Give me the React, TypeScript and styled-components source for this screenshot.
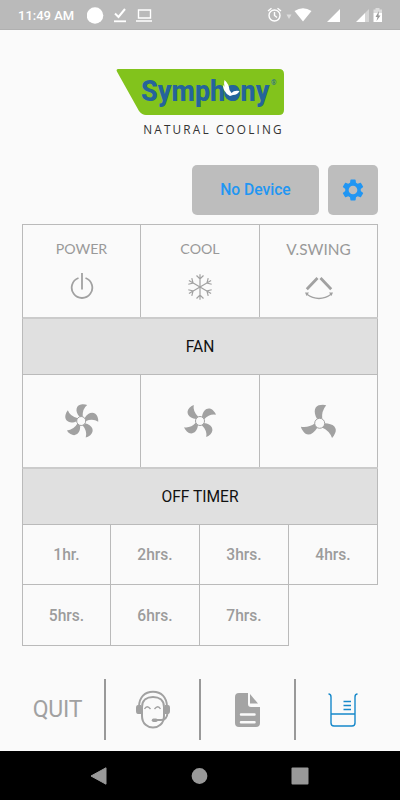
import React from "react";
import styled, { createGlobalStyle } from "styled-components";

const GlobalStyle = createGlobalStyle`
  * { box-sizing: border-box; }
  body { margin: 0; background: #fafafa; font-family: Roboto, sans-serif; }
  svg { display: block; flex: none; }
`;

const LINE = "#bababa";
const ICON = "#a1a1a1";

const Screen = styled.div`
  width: 400px;
  height: 800px;
  display: flex;
  flex-direction: column;
  background: #fafafa;
  overflow: hidden;
`;

const StatusBar = styled.header`
  height: 30px;
  flex: none;
  display: flex;
  align-items: center;
  justify-content: space-between;
  padding: 2px 17px 0 18px;
  background: #bababa;
  border-bottom: 1px solid #b0b0b0;
  color: #fff;
`;

const StatusGroup = styled.div`
  display: flex;
  align-items: center;
`;

const Clock = styled.span`
  width: 69px;
  font-size: 13px;
  font-weight: 500;
  white-space: nowrap;
`;

const Brand = styled.div`
  display: flex;
  flex-direction: column;
  align-items: center;
  height: 135px;
  padding-top: 39px;
`;

const Tagline = styled.div`
  margin-top: 4px;
  padding-left: 27px;
  font-family: "Open Sans", sans-serif;
  font-size: 11.8px;
  line-height: 16px;
  letter-spacing: 2.15px;
  color: #333;
  white-space: nowrap;
`;

const DeviceBar = styled.div`
  display: flex;
  justify-content: flex-end;
  gap: 9px;
  padding-right: 22px;
  height: 59px;
`;

const DeviceButton = styled.button<{ $width: number }>`
  width: ${(p) => p.$width}px;
  height: 50px;
  padding: 0;
  border: 0;
  border-radius: 5px;
  display: flex;
  align-items: center;
  justify-content: center;
  background: #bdbdbd;
  color: #2196f3;
  font: 500 15.6px Roboto, sans-serif;
`;

const Panel = styled.main`
  width: 356px;
  margin-left: 22px;
  flex: none;
`;

const ControlRow = styled.div`
  display: grid;
  grid-template-columns: 118px 119px 118px;
  height: 94px;
  border-left: 1px solid ${LINE};
  border-bottom: 2px solid #cbcbcb;
`;

const FunctionRow = styled(ControlRow)`
  height: 95px;
  border-top: 1px solid ${LINE};
`;

const ControlCell = styled.div`
  display: flex;
  flex-direction: column;
  align-items: center;
  border-right: 1px solid ${LINE};
`;

const FanCell = styled(ControlCell)`
  justify-content: center;
`;

const Label = styled.span<{ $size?: number }>`
  height: 47px;
  padding-top: 13px;
  font-family: Lato, sans-serif;
  font-size: ${(p) => p.$size ?? 14.2}px;
  line-height: 22px;
  color: #999;
`;

const SectionTitle = styled.div`
  height: 56px;
  display: flex;
  align-items: center;
  justify-content: center;
  background: #e0e0e0;
  border: 1px solid ${LINE};
  border-top: 0;
  font-size: 15.6px;
  color: #111;
`;

const TimerGrid = styled.div`
  display: grid;
  grid-template-columns: 89px 89px 89px 89px;
  grid-template-rows: 60px 61px;
`;

const TimerCell = styled.div<{ $first?: boolean }>`
  display: flex;
  align-items: center;
  justify-content: center;
  padding-top: 1px;
  border: solid ${LINE};
  border-width: 0 1px 1px ${(p) => (p.$first ? 1 : 0)}px;
  font-size: 15.6px;
  font-weight: 500;
  color: #9c9c9c;
`;

const Footer = styled.footer`
  display: grid;
  grid-template-columns: 95px 95px 95px 93px;
  height: 61px;
  margin: 33px 0 11px 11px;
  flex: none;
`;

const FooterItem = styled.div<{ $last?: boolean }>`
  display: flex;
  align-items: center;
  justify-content: center;
  border-right: ${(p) => (p.$last ? "0" : "2px solid #999")};
`;

const Quit = styled.span`
  font-size: 23px;
  letter-spacing: -0.2px;
  color: #a1a1a1;
`;

const NavBar = styled.nav`
  flex: 1;
  display: flex;
  justify-content: space-between;
  align-items: center;
  padding: 0 91px 0 90px;
  background: #000;
`;

const Logo = () => (
  <svg width="168" height="48" viewBox="116 69 168 48">
    <path d="M118.5 69H279q5 0 5 5v36q0 5-5 5H146q-4 0-7-4L117.2 72q-1.700-3 1.300-3Z" fill="#82c31c" />
    <text x="141" y="101" textLength="128.500" lengthAdjust="spacingAndGlyphs" fontFamily="Roboto, sans-serif" fontWeight="800" fontSize="30" fill="#25649b">Symphony</text>
    <circle cx="232" cy="93" r="7.800" fill="#25649b" />
    <path d="M224.500 80Q229 84 229.500 90L231.500 93Q234 90 239.500 91Q237.500 95 233 95L230 96Q226 94 224 90Q222.500 86 223.500 85L224.500 87Q223.500 83 224.500 80Z" fill="#fff" />
    <text x="271" y="85" fontFamily="Roboto, sans-serif" fontSize="7" fill="#25649b">®</text>
  </svg>
);

const BLADE = "M-1.500-4C-7-10-5-16.500 1-16.800Q4-17 6-16Q.8-12 1.500-4Z";
const LARGE_BLADE = "M-2.500-4C-7-12-5-18 1-18.300Q4-18.800 6.500-18Q1.500-12 2.500-4Z";

const Fan = ({ blades, turn = 0, dx = 0, dy = 0 }: { blades: number; turn?: number; dx?: number; dy?: number }) => (
  <svg width="42" height="42" viewBox="-21 -21 42 42">
    <g transform={`translate(${dx} ${dy})`}>
      {Array.from({ length: blades }, (_, i) => (
        <path key={i} d={blades === 3 ? LARGE_BLADE : BLADE} fill={ICON} transform={`rotate(${turn + (i * 360) / blades})`} />
      ))}
      <circle r={blades === 3 ? 5 : 4.5} fill="#fafafa" stroke={ICON} strokeWidth="1" />
    </g>
  </svg>
);

const Power = () => (
  <svg width="24" height="30" viewBox="-12 -15 24 30" fill="none" stroke={ICON} strokeWidth="1.800">
    <path d="M-3.500-9A10.300 10.300 0 1 0 3.500-9M0-14V2.500" />
  </svg>
);

const Snowflake = () => (
  <svg width="30" height="30" viewBox="-15 -15 30 30" fill="none" stroke={ICON} strokeWidth="1.200">
    {[0, 60, 120, 180, 240, 300].map((a) => (
      <path key={a} d="M0 0V-12.800M-3.500-11.500L0-8L3.500-11.500" transform={`rotate(${a})`} />
    ))}
  </svg>
);

const Swing = () => (
  <svg width="30" height="30" viewBox="0 0 30 30" fill="none" stroke={ICON}>
    <path d="M2.800 17.200L13.500 6M16.500 6L27.200 17.200" strokeWidth="2.800" />
    <path d="M2.500 22Q15 31 27.500 22" strokeWidth="1.500" />
    <path d="M1 20.500H5L2.500 24ZM29 20.500H25L27.500 24Z" fill={ICON} stroke="none" />
  </svg>
);

const Support = () => (
  <svg width="38" height="40" viewBox="0 0 38 40" fill="none" stroke={ICON} strokeWidth="2">
    <path d="M8 17V26C8 34 14 37.500 19 37.500S30 34 30 26V17C30 10 25 7 19 7S8 10 8 17Z" />
    <path d="M5 17C5 7 11 1.800 19 1.800S33 7 33 17" />
    <path d="M6 16H4Q3 16 3 18V21Q3 23 4 23H6ZM32 16H34Q35 16 35 18V21Q35 23 34 23H32Z" fill={ICON} />
    <path d="M33.500 23Q33 30 27 30H21" />
    <path d="M19.500 30.300H22" strokeWidth="3.500" strokeLinecap="round" />
    <path d="M10.500 19Q13 14.500 16.500 19M20.500 19Q24 14.500 26.500 19" strokeWidth="1.300" />
  </svg>
);

const Document = () => (
  <svg width="25" height="34" viewBox="0 0 25 34">
    <path d="M4 0H13V11Q13 14 16 14H25V30Q25 34 21 34H4Q0 34 0 30V4Q0 0 4 0ZM15 1L23 10.500H15Z" fill="#a4a4a4" />
    <path d="M6 21.500H19.500M6 29.200H19.500" stroke="#fafafa" strokeWidth="2.500" strokeLinecap="round" />
  </svg>
);

const Beaker = () => (
  <svg width="34" height="34" viewBox="0 0 34 34" fill="none" stroke="#1688ca" strokeWidth="1.400">
    <path d="M2.500 1Q5 1 5 4V30Q5 33 8 33H26Q29 33 29 30V4Q29 1 31.500 1M5 21H29M17.500 8.500H25M17.500 12.500H25M17.500 16.500H25" />
  </svg>
);

const Gear = () => (
  <svg width="26" height="26" viewBox="0 0 24 24" fill="#2196f3">
    <path d="M19.140 12.940c.04-.3.060-.61.060-.94s-.02-.64-.07-.94l2.030-1.580a.49.490 0 0 0 .12-.61l-1.920-3.320a.49.490 0 0 0-.59-.22l-2.390.960c-.5-.38-1.030-.7-1.620-.94L14.400 2.810a.48.480 0 0 0-.48-.41h-3.840a.47.470 0 0 0-.47.410L9.250 5.350c-.59.240-1.130.57-1.620.94l-2.390-.96a.48.480 0 0 0-.59.220L2.740 8.870a.47.470 0 0 0 .12.610l2.030 1.580c-.05.300-.09.630-.09.940s.02.640.070.940l-2.030 1.580a.49.490 0 0 0-.12.610l1.920 3.320c.12.220.37.290.59.220l2.390-.96c.5.380 1.030.700 1.620.940l.36 2.540c.05.240.24.410.48.410h3.840c.24 0 .44-.17.470-.41l.36-2.540c.59-.24 1.130-.56 1.620-.94l2.390.960c.22.080.47 0 .59-.22l1.920-3.320a.47.470 0 0 0-.12-.61zM12 16a4 4 0 1 1 0-8 4 4 0 0 1 0 8z" />
  </svg>
);

const Notifications = () => (
  <svg width="67" height="18" viewBox="0 0 67 18" fill="none" stroke="#fff">
    <circle cx="8" cy="8.500" r="8.300" fill="#fff" stroke="none" />
    <path d="M28 6.500L31.500 10L38 2" strokeWidth="2" />
    <path d="M27 14.300H39" strokeWidth="1.800" />
    <path d="M51.500 3H63.500V11H51.500ZM49 14H65" strokeWidth="1.400" />
  </svg>
);

const SystemIcons = () => (
  <svg width="116" height="18" viewBox="267 7 116 18" fill="#fff">
    <g fill="none" stroke="#fff" strokeWidth="1.400">
      <circle cx="274.500" cy="15.500" r="5.500" />
      <path d="M274.500 12V15.500L277 17.500M268 11L271.500 8.300M277.500 8.300L281 11" />
    </g>
    <path d="M286.500 14.500H291.500L289 19Z" opacity=".5" />
    <path d="M294.500 11Q303 5.500 311.500 11L303 21.500ZM327 22L340 9V22ZM356 22L365 13V22Z" />
    <path d="M365 13L369 9V22H365Z" opacity=".4" />
    <path d="M375.500 8H379.500V9.500H382V13H373.500V9.500H375.500Z" opacity=".5" />
    <path d="M373.500 13H382V22H373.500Z" />
    <path d="M379 11L375.500 17H377.500L376.500 21L380.500 15.500H378.500Z" fill="#999" />
  </svg>
);

const hours = ["1hr.", "2hrs.", "3hrs.", "4hrs.", "5hrs.", "6hrs.", "7hrs."];

export default function App() {
  return (
    <Screen>
      <GlobalStyle />
      <StatusBar>
        <StatusGroup>
          <Clock>11:49 AM</Clock>
          <Notifications />
        </StatusGroup>
        <SystemIcons />
      </StatusBar>
      <Brand>
        <Logo />
        <Tagline>NATURAL COOLING</Tagline>
      </Brand>
      <DeviceBar>
        <DeviceButton $width={127}>No Device</DeviceButton>
        <DeviceButton $width={50} aria-label="Settings"><Gear /></DeviceButton>
      </DeviceBar>
      <Panel>
        <FunctionRow>
          <ControlCell><Label>POWER</Label><Power /></ControlCell>
          <ControlCell><Label>COOL</Label><Snowflake /></ControlCell>
          <ControlCell><Label $size={15.4}>V.SWING</Label><Swing /></ControlCell>
        </FunctionRow>
        <SectionTitle>FAN</SectionTitle>
        <ControlRow>
          <FanCell><Fan blades={5} dx={-0.8} /></FanCell>
          <FanCell><Fan blades={4} turn={48} /></FanCell>
          <FanCell><Fan blades={3} dx={0.7} dy={2.3} /></FanCell>
        </ControlRow>
        <SectionTitle>OFF TIMER</SectionTitle>
        <TimerGrid>
          {hours.map((h, i) => (
            <TimerCell key={h} $first={i % 4 === 0}>{h}</TimerCell>
          ))}
        </TimerGrid>
      </Panel>
      <Footer>
        <FooterItem><Quit>QUIT</Quit></FooterItem>
        <FooterItem><Support /></FooterItem>
        <FooterItem><Document /></FooterItem>
        <FooterItem $last><Beaker /></FooterItem>
      </Footer>
      <NavBar>
        <svg width="17" height="18" viewBox="0 0 17 18"><path d="M1 9L16 .8V17.200Z" fill="#999" stroke="#999" strokeLinejoin="round" /></svg>
        <svg width="18" height="16" viewBox="0 0 18 16"><circle cx="9.500" cy="8" r="7.900" fill="#999" /></svg>
        <svg width="18" height="18" viewBox="0 0 18 18"><rect x=".5" y=".5" width="17" height="17" rx="1" fill="#999" /></svg>
      </NavBar>
    </Screen>
  );
}
